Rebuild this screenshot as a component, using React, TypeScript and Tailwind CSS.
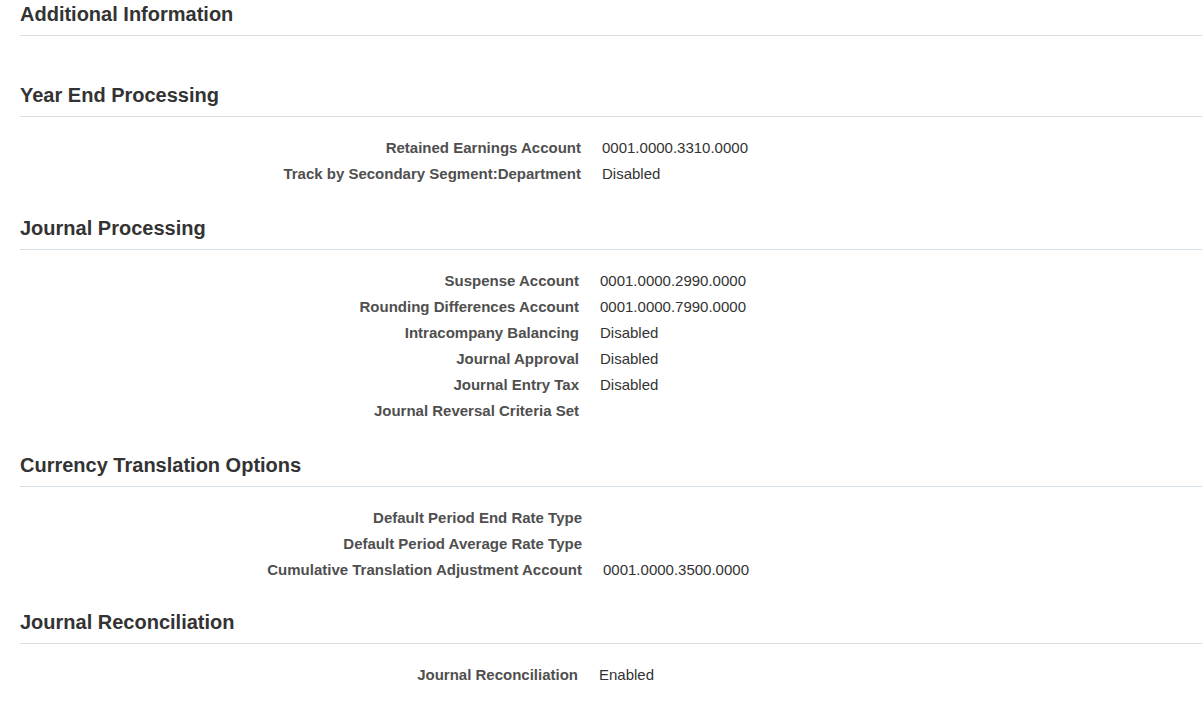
import React from "react";

type Row = { label: string; value?: string };

interface SectionProps {
  title: string;
  rows: Row[];
  labelWidth: string;
  className?: string;
}

const sections: { title: string; labelWidth: string; space: string; rows: Row[] }[] = [
  {
    title: "Year End Processing",
    labelWidth: "w-[561px]",
    space: "mb-[30px]",
    rows: [
      { label: "Retained Earnings Account", value: "0001.0000.3310.0000" },
      { label: "Track by Secondary Segment:Department", value: "Disabled" },
    ],
  },
  {
    title: "Journal Processing",
    labelWidth: "w-[559px]",
    space: "mb-[30px]",
    rows: [
      { label: "Suspense Account", value: "0001.0000.2990.0000" },
      { label: "Rounding Differences Account", value: "0001.0000.7990.0000" },
      { label: "Intracompany Balancing", value: "Disabled" },
      { label: "Journal Approval", value: "Disabled" },
      { label: "Journal Entry Tax", value: "Disabled" },
      { label: "Journal Reversal Criteria Set" },
    ],
  },
  {
    title: "Currency Translation Options",
    labelWidth: "w-[562px]",
    space: "mb-[28px]",
    rows: [
      { label: "Default Period End Rate Type" },
      { label: "Default Period Average Rate Type" },
      {
        label: "Cumulative Translation Adjustment Account",
        value: "0001.0000.3500.0000",
      },
    ],
  },
  {
    title: "Journal Reconciliation",
    labelWidth: "w-[558px]",
    space: "",
    rows: [{ label: "Journal Reconciliation", value: "Enabled" }],
  },
];

const Heading: React.FC<{ title: string }> = ({ title }) => (
  <h2 className="pb-[9px] border-b border-[#d6dfe6] text-[20px] leading-[23px] font-bold text-[#333333]">
    {title}
  </h2>
);

const Section: React.FC<SectionProps> = ({ title, rows, labelWidth, className }) => (
  <section className={className}>
    <Heading title={title} />
    <div className="pt-[18px] flex flex-col">
      {rows.map((r) => (
        <div key={r.label} className="flex gap-[21px] h-[26px] leading-[26px] text-[15px]">
          <div className={`${labelWidth} shrink-0 text-right font-bold text-[#4f4f4f]`}>
            {r.label}
          </div>
          <div className="text-[#333333]">{r.value}</div>
        </div>
      ))}
    </div>
  </section>
);

export default function App() {
  return (
    <div
      className="min-h-screen bg-white pl-5 pt-[3px]"
      style={{ fontFamily: '"Liberation Sans", Arial, sans-serif' }}
    >
      <Heading title="Additional Information" />
      <div className="pt-[48px] flex flex-col">
        {sections.map((s) => (
          <Section
            key={s.title}
            title={s.title}
            rows={s.rows}
            labelWidth={s.labelWidth}
            className={s.space}
          />
        ))}
      </div>
    </div>
  );
}
